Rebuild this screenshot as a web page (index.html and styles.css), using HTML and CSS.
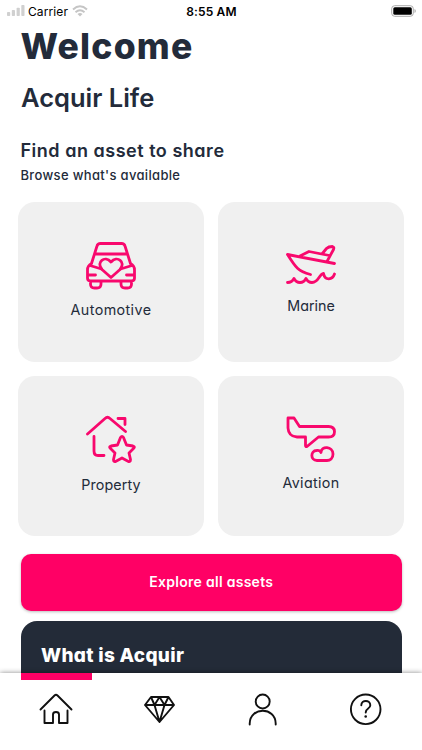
FILE: index.html
```
<!DOCTYPE html>
<html lang="en">
<head>
<meta charset="utf-8">
<meta name="viewport" content="width=device-width, initial-scale=1">
<title>Acquir Life</title>
<link rel="stylesheet" href="styles.css">
</head>
<body>
<div class="app">
  <header class="status">
    <div class="carrier">
      <svg class="signal" width="18" height="11" viewBox="0 0 18 11" fill="#d0d0d0"><rect x="0" y="7" width="3.2" height="4" rx=".8"/><rect x="4.8" y="5" width="3.2" height="6" rx=".8"/><rect x="9.6" y="2.7" width="3.2" height="8.3" rx=".8"/><rect x="14.3" y="0" width="3.2" height="11" rx=".8"/></svg>
      <span class="carrier-name">Carrier</span>
      <svg class="wifi" width="16" height="12" viewBox="0 0 16 12" fill="none" stroke="#c5c5c5" stroke-width="1.9"><path d="M1 4.5Q8-1.9 15 4.5M3.5 7.2Q8 3.1 12.5 7.2"/><path d="M5.5 9Q8 7 10.5 9L8 11.6Z" fill="#c5c5c5" stroke="none"/></svg>
    </div>
    <span class="time">8:55 AM</span>
    <svg class="battery" width="26" height="12" viewBox="0 0 26 12"><rect x=".7" y=".7" width="21.6" height="10.6" rx="3" fill="none" stroke="#aaa"/><rect x="2.3" y="2.2" width="18.5" height="7.6" rx="1.5"/><path d="M23.5 4v4q1.3-.6 1.3-2t-1.3-2" fill="#aaa"/></svg>
  </header>
  <main class="content">
    <h1 class="welcome">Welcome</h1>
    <h2 class="brand">Acquir Life</h2>
    <h3 class="find">Find an asset to share</h3>
    <p class="browse">Browse what's available</p>
    <section class="assets">
      <a class="asset">
        <svg class="icon icon-car" viewBox="0 0 50 48"><path d="M5.5 21.5 11 4Q11.7 1.5 14.5 1.5H35.5Q38.3 1.5 39 4L44.5 21.5M9.5 12H40.5M5.5 21.5Q1.5 23.5 1.5 28V36Q1.5 39 4.5 39H45.5Q48.5 39 48.5 36V28Q48.5 23.5 44.5 21.5M4 23.5 15.5 27M46 23.5 34.5 27M2 33H9.5M48 33H40.5M4.5 39V42Q4.5 46 8.5 46H11Q15 46 15 42V39M35 39V42Q35 46 39 46H41.5Q45.5 46 45.5 42V39"/><path d="M25 35.5 16 27.5C9.5 20 19 13 25 20 31 13 40.5 20 34 27.5Z"/></svg>
        <span class="label-automotive">Automotive</span>
      </a>
      <a class="asset asset-marine">
        <svg class="icon icon-boat" viewBox="0 0 50 40"><path d="M24.5 29.5C12 26 10 23 1.5 9.5L48.5 18.5M14 11 23 6.5 43.5 10.5M36 9 40.5 3.5Q42.5 1.5 46.5 1.5 48.5 2 47.5 4.5L41 16.5M1.5 37.5Q6 37.5 8 33.5Q10 37.5 14 37.5T20 33.5Q22 37.5 26 37.5C33 37.5 33 29 37.5 28.5C39 36 46.5 35 48.5 29"/></svg>
        <span class="label-marine">Marine</span>
      </a>
      <a class="asset asset-property">
        <svg class="icon icon-house" viewBox="0 0 50 48"><path d="M1.5 19 19 3.5Q21.5 1 24 3.5L39.5 16.5M32 3.5H39V9.5M8 21.5V36Q8 40.5 12 40.5H18"/><path d="M34.5 22.5Q36 20.3 37.5 22.5L40.5 30 47 31Q49.5 31.7 47.5 33.5L43 38 44.5 44.5Q44.5 47.5 42 46.2L36 43 30 46.2Q27.5 47.5 27.5 44.5L29 38 24.5 33.5Q22.5 31.7 25 31L31.5 30Z"/></svg>
        <span class="label-property">Property</span>
      </a>
      <a class="asset asset-aviation">
        <svg class="icon icon-plane" viewBox="0 0 50 46"><path d="M2 2H8L13.5 10.5H42.5Q48.5 10.5 48.5 15.7T42.5 21H32.5L21 30.5Q19.5 31 19.5 29.5V21H11Q2.5 20.5 2 12Z"/><path d="M31 44.5C24 44.5 24.5 34.5 30.5 34.5 33 34.3 34.5 35 35 36.5 35 29.5 47 30 47 38 47 42.5 44 44.5 41 44.5Z"/></svg>
        <span class="label-aviation">Aviation</span>
      </a>
    </section>
    <button class="explore"><span>Explore all assets</span></button>
    <section class="about"><h2><span>What is Acquir</span></h2></section>
  </main>
  <nav class="tabs">
    <a class="tab active"><svg width="34" height="34" viewBox="0 0 34 34"><path d="M1.5 17.5 15.5 3.5Q17 2 18.5 3.5L32.5 17.5M5.5 18.5V31H14V22.5Q14 20 17 20T20 22.5V31H28.5V18.5"/></svg></a>
    <a class="tab"><svg width="34" height="34" viewBox="0 0 34 34"><path d="M9 5H26.5L32 13 17.5 30 3 13ZM3 13H32M9 5 12.5 13 17.5 5 22.5 13 26.5 5M12.5 13 17.5 30 22.5 13"/></svg></a>
    <a class="tab"><svg width="34" height="34" viewBox="0 0 34 34"><circle cx="16.7" cy="9.5" r="7"/><path d="M3.7 32.5V31.5C4 14.5 29.5 14.5 29.7 31.5V32.5"/></svg></a>
    <a class="tab"><svg width="34" height="34" viewBox="0 0 34 34"><circle cx="16.7" cy="17.3" r="14.8"/><path d="M12.3 13.3C12.3 7.5 21.3 7.5 21.3 13.3 21.3 17 16.7 16 16.7 20.5"/><circle cx="16.7" cy="24.5" r="1.3" fill="#111" stroke="none"/></svg></a>
  </nav>
</div>
</body>
</html>
```
FILE: styles.css
```
* { box-sizing: border-box; }
body, h1, h2, h3, p { margin: 0; }
body { background: #fff; color: #232b3a; font-family: Inter, "Liberation Sans", sans-serif; font-feature-settings: "cv11"; }
.app { height: 750px; overflow: hidden; display: flex; flex-direction: column; }
.status { height: 22px; flex: none; display: grid; grid-template-columns: 1fr auto 1fr; align-items: center; padding: 0 5px 0 7px; color: #000; font-size: 12px; font-feature-settings: normal; }
.carrier { display: flex; align-items: center; }
.signal, .wifi { margin-bottom: 1px; }
.carrier-name { margin: 0 4px 0 3px; letter-spacing: .1px; }
.time { font-weight: 600; letter-spacing: .15px; margin-right: 1px; }
.battery { justify-self: end; margin-bottom: 1px; }
.content { flex: 1; min-height: 0; overflow: hidden; padding: 0 21px; white-space: nowrap; }
.welcome { font-size: 35.5px; line-height: 50px; font-weight: 800; letter-spacing: 1.2px; margin-left: -.5px; }
.brand { font-size: 25.5px; line-height: 34px; margin-top: 9px; font-weight: 600; }
.find { font-size: 18px; line-height: 26px; margin-top: 23px; font-weight: 600; letter-spacing: .52px; margin-left: -.5px; }
.browse { font-size: 13px; line-height: 20px; margin-top: 1px; font-weight: 500; letter-spacing: .33px; margin-left: -.5px; }
.assets { display: grid; grid-template-columns: 186px 186px; grid-auto-rows: 159.8px; gap: 14.5px 14px; margin: 17px -3px 0; }
.asset { display: flex; flex-direction: column; align-items: center; padding-top: 40px; border-radius: 17px; background: #f0f0f0; font-size: 14.3px; line-height: 20px; }
.label-automotive { letter-spacing: .4px; }
.label-property { letter-spacing: .1px; }
.label-aviation { letter-spacing: .35px; }
.icon { width: 50px; height: 48px; margin-bottom: 10px; fill: none; stroke: #f8086d; stroke-width: 2.8; stroke-linecap: round; stroke-linejoin: round; }
.asset-marine { padding-top: 43px; }
.icon-boat { height: 40px; margin-bottom: 11px; }
.asset-property { padding-top: 39px; }
.icon-house { margin-bottom: 11.5px; }
.icon-plane { height: 46px; margin-bottom: 11px; }
.asset-aviation { padding-top: 40px; }
.explore { display: block; width: 380.5px; height: 57px; margin-top: 17.9px; padding: 0; border: 0; border-radius: 10px; background: #ff0065; color: #fff; box-shadow: 0 1px 3px #0004; font: 600 14px/20px Inter, sans-serif; font-feature-settings: "cv11"; letter-spacing: .28px; }
.about { width: 380.5px; height: 90px; margin-top: 10px; padding: 20px; border-radius: 16px; background: #232b38; color: #fff; }
.about h2 { font-size: 19px; line-height: 29px; font-weight: 800; letter-spacing: .3px; }
.tabs { position: relative; height: 77px; flex: none; display: grid; grid-template-columns: repeat(4, 71px); justify-content: space-between; padding: 0 20.5px; background: #fff; box-shadow: 0 0 5px #0007; }
.tab { display: flex; justify-content: center; padding-top: 12px; border-top: 7px solid transparent; }
.active { border-top-color: #ff0065; }
.tab svg { fill: none; stroke: #111; stroke-width: 1.9; stroke-linejoin: round; stroke-linecap: round; }
```
